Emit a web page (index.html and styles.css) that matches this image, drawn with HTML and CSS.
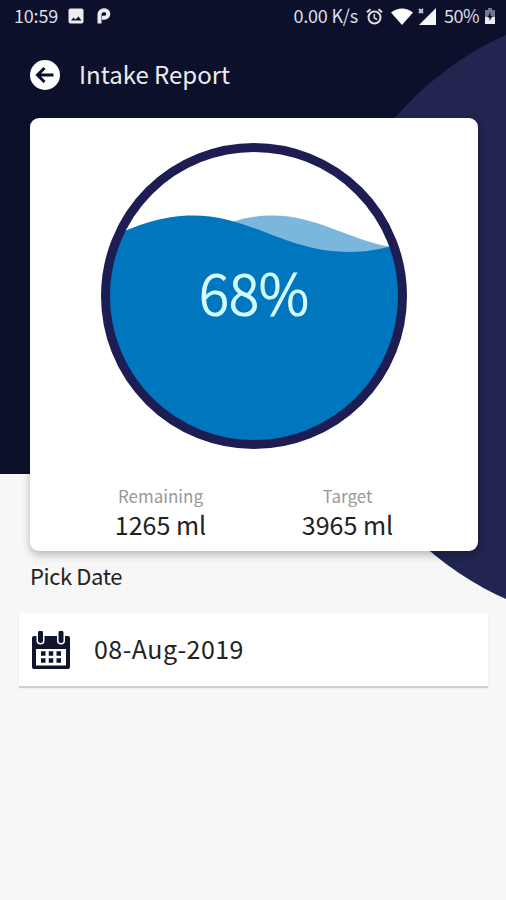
FILE: index.html
```html
<!DOCTYPE html>
<html lang="en">
<head>
  <meta charset="UTF-8">
  <meta name="viewport" content="width=device-width, initial-scale=1">
  <title>Intake Report</title>
  <link rel="stylesheet" href="styles.css">
</head>
<body>
  <div class="screen">
    <svg class="backdrop" viewBox="0 0 506 900" aria-hidden="true">
      <path d="M0 0h506v474H0z" fill="#0c102b"/>
      <circle cx="630" cy="317" r="308" fill="#21254f"/>
    </svg>

    <div class="statusbar">
      <span class="clock">10:59</span>
      <svg class="icon-image" width="16" height="16" viewBox="0 0 16 16">
        <rect x="0.5" y="0.5" width="15" height="15" rx="2" fill="#ececf1"/>
        <path d="M3 12.500l2.500-3 2 2 3-3 3 4z" fill="#0c102b"/>
      </svg>
      <svg class="icon-p" width="14" height="16" viewBox="0 0 14 16">
        <path d="M2.500 15.500V6.200A4.200 4.200 0 0 1 6.700 2.200h.8a3.800 3.800 0 0 1 0 7.600H5" fill="none" stroke="#ececf1" stroke-width="4"/>
      </svg>
      <span class="speed">0.00 K/s</span>
      <svg class="icon-alarm" width="17" height="17" viewBox="0 0 17 17" fill="none" stroke="#dedee6">
        <circle cx="8.500" cy="9.500" r="6" stroke-width="2"/>
        <path d="M1 4.300L4.500 1.200M16 4.300L12.500 1.200" stroke-width="2"/>
        <path d="M8.300 6v4l2.800 1.500" stroke-width="1.500"/>
      </svg>
      <svg class="icon-wifi" width="22" height="17" viewBox="0 0 22 17">
        <path d="M0 4.500Q11-3.500 22 4.500L11 17z" fill="#fff"/>
      </svg>
      <svg class="icon-signal" width="18" height="17" viewBox="0 0 18 17">
        <path d="M18 0v17H1z" fill="#f5f5f8"/>
        <path d="M1 1l4 4M5 1L1 5" stroke="#c9c9d4" stroke-width="2"/>
      </svg>
      <span class="battery">50%</span>
      <svg class="icon-battery" width="10" height="16" viewBox="0 0 10 16">
        <path d="M3 0h4v2h3v14H0V2h3z" fill="#73758a"/>
        <path d="M0 9h10v7H0z" fill="#ececf1"/>
        <path d="M5.500 4L2.500 9.500h2V13l3-5h-2z" fill="#0c102b"/>
      </svg>
    </div>

    <header class="toolbar">
      <svg class="back" width="30" height="30" viewBox="0 0 30 30">
        <circle cx="15" cy="15" r="15" fill="#fff"/>
        <path d="M23.500 15H8M14.500 8L7.500 15l7 7" fill="none" stroke="#0c102b" stroke-width="3"/>
      </svg>
      <h1>Intake Report</h1>
    </header>

    <section class="card">
      <div class="gauge">
        <svg viewBox="0 0 306 306">
          <defs>
            <clipPath id="bowl"><circle cx="153" cy="153" r="146"/></clipPath>
          </defs>
          <g clip-path="url(#bowl)">
            <path d="M100 92C130 78 145 72.500 172 72.500C215 72.500 249 97 290 104V140H100z" fill="#7bb7dd"/>
            <path d="M0 97C30 86 55 72.500 92 72.500C150 72.500 185 109 248 109C270 109 285 105 306 99V306H0z" fill="#0076bf"/>
          </g>
          <circle cx="153" cy="153" r="148.500" fill="none" stroke="#1d1d54" stroke-width="9"/>
        </svg>
        <span class="percent">68%</span>
      </div>
      <div class="stats">
        <div class="stat">
          <span class="label">Remaining</span>
          <span class="value">1265 ml</span>
        </div>
        <div class="stat">
          <span class="label">Target</span>
          <span class="value">3965 ml</span>
        </div>
      </div>
    </section>

    <h2>Pick Date</h2>
    <div class="datepicker">
      <svg width="38" height="38" viewBox="0 0 38 38">
        <path d="M2 5h34a2 2 0 0 1 2 2v29a2 2 0 0 1-2 2H2a2 2 0 0 1-2-2V7a2 2 0 0 1 2-2z" fill="#11142d"/>
        <path d="M4 18h30v16.500H4z" fill="#fff"/>
        <path d="M8.500 0v9.500M29 0v9.500" stroke="#fff" stroke-width="8" stroke-linecap="round"/>
        <path d="M8.500 2v7.500M29 2v7.500" stroke="#11142d" stroke-width="5" stroke-linecap="round"/>
        <path d="M9 22.500h20M9 29.500h20" stroke="#11142d" stroke-width="4.500" stroke-dasharray="4.500 3.250"/>
      </svg>
      <span>08-Aug-2019</span>
    </div>
  </div>
</body>
</html>
```
FILE: styles.css
```css
* {
  box-sizing: border-box;
}
body {
  margin: 0;
  font-family: "Noto Sans CJK SC", "Noto Sans", sans-serif;
  background: #f7f7f7;
  color: #222;
}
.screen {
  position: relative;
  height: 900px;
  overflow: hidden;
}
/* dark header shapes behind the content */
.backdrop {
  position: absolute;
  top: 0;
  left: 0;
  width: 506px;
  height: 900px;
  z-index: -1;
}
.statusbar {
  display: flex;
  align-items: center;
  height: 32px;
  padding: 0 11px 0 14px;
  color: #dedee6;
  font-size: 18px;
  white-space: nowrap;
}
.statusbar span {
  height: 32px;
  line-height: 30px;
}
.clock {
  width: 54px;
  letter-spacing: -0.2px;
}
.icon-p {
  margin-left: 13px;
}
.speed {
  margin-left: auto;
  letter-spacing: -0.2px;
}
.icon-alarm {
  margin-left: 8px;
}
.icon-wifi {
  margin-left: 8px;
}
.icon-signal {
  margin-left: 5px;
}
.battery {
  margin-left: 8px;
  letter-spacing: -0.5px;
}
.icon-battery {
  margin-left: 6px;
}
.toolbar {
  display: flex;
  align-items: center;
  height: 86px;
  padding-left: 30px;
}
h1 {
  margin: 0 0 2px 19px;
  color: #ececf0;
  font-size: 24px;
  font-weight: 400;
  line-height: 34px;
}
.card {
  width: 448px;
  height: 433px;
  margin-left: 30px;
  padding-top: 25px;
  background: #fff;
  border-radius: 9px;
  box-shadow: 0 4px 9px rgba(0, 0, 0, 0.25);
}
.gauge {
  display: grid;
  width: 306px;
  height: 306px;
  margin: 0 auto;
  place-items: center;
}
.gauge svg,
.percent {
  grid-area: 1 / 1;
}
.percent {
  padding-bottom: 10px;
  color: #d4fbff;
  font-size: 56px;
  font-weight: 300;
  line-height: 60px;
  -webkit-text-stroke: 1.2px #d4fbff;
}
.stats {
  display: flex;
  margin: 34px 37px 0;
}
.stat {
  display: flex;
  flex: 1;
  flex-direction: column;
  align-items: center;
}
.label {
  color: #999;
  font-size: 17px;
  line-height: 26px;
}
.value {
  font-size: 25px;
  line-height: 30px;
}
h2 {
  margin: 7px 0 0 30px;
  font-size: 22px;
  font-weight: 400;
  line-height: 34px;
  letter-spacing: -0.4px;
}
.datepicker {
  display: flex;
  align-items: center;
  width: 469px;
  height: 73px;
  margin: 21px 0 0 19px;
  padding-left: 13px;
  background: #fff;
  box-shadow: 0 2px 1px #d0d0d0;
}
.datepicker span {
  margin: 0 0 4px 24px;
  font-size: 25px;
  line-height: 36px;
  letter-spacing: 0.45px;
}
```
